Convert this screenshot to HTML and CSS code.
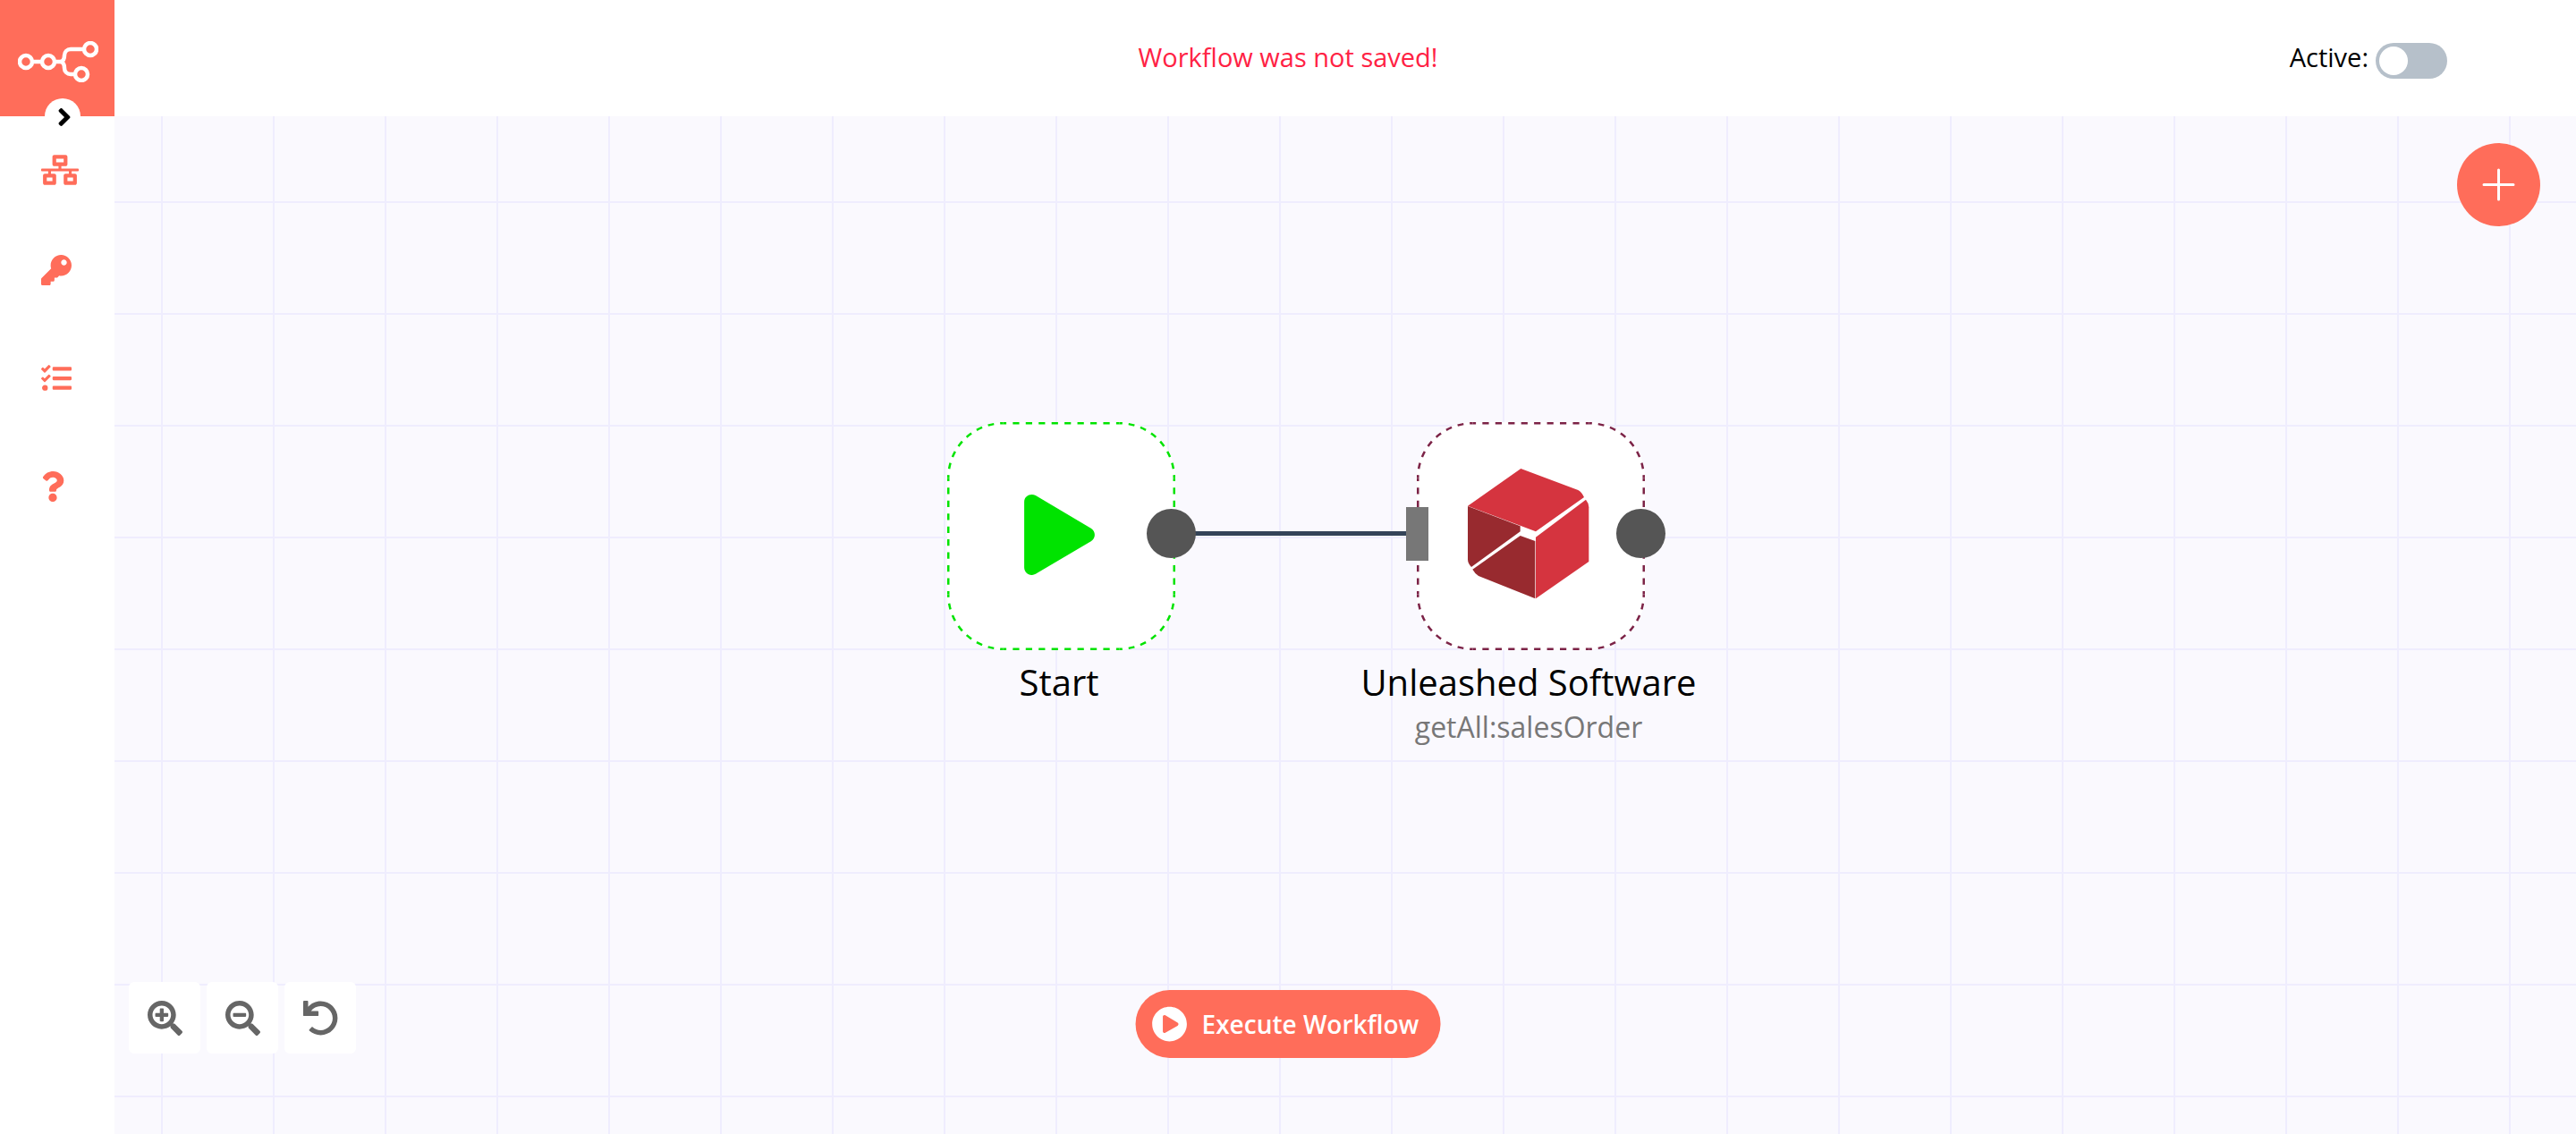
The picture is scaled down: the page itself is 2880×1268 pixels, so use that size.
FILE: index.html
```html
<!DOCTYPE html>
<html lang="en">
<head>
<meta charset="utf-8">
<title>Workflow</title>
<link rel="stylesheet" href="styles.css">
</head>
<body>
<div class="app">
  <header class="topbar">
    <a class="logo" href="#" aria-label="Home">
      <svg width="90" height="46" viewBox="0 0 90 46" fill="none" stroke="currentColor" stroke-width="4.500">
        <circle cx="9" cy="23" r="7"/><circle cx="34" cy="23" r="7"/><circle cx="81" cy="9" r="7"/><circle cx="71" cy="37" r="7"/>
        <path d="M16 23h11M41 23h6c4 0 5-4 5-7 0-4 3-7 7-7h15M47 23c4 0 5 4 5 7 0 4 3 7 7 7h5"/>
      </svg>
    </a>
    <p class="status" role="status">Workflow was not saved!</p>
    <div class="activation">
      <label for="active">Active:</label>
      <input class="switch" id="active" type="checkbox" role="switch">
    </div>
  </header>

  <aside class="sidebar">
    <button class="expand" type="button" aria-label="Expand menu">
      <svg width="16" height="32" viewBox="0 0 256 512" fill="currentColor"><path d="M224.300 273l-136 136c-9.400 9.400-24.600 9.400-33.900 0l-22.600-22.600c-9.400-9.400-9.400-24.600 0-33.900l96.400-96.400-96.400-96.400c-9.400-9.400-9.400-24.600 0-33.900L54.300 103c9.400-9.400 24.600-9.400 33.900 0l136 136c9.500 9.400 9.500 24.600.1 34z"/></svg>
    </button>
    <nav>
      <ul class="menu">
        <li><a href="#" aria-label="Workflows"><svg width="42" height="34" viewBox="0 0 640 512" fill="currentColor"><path d="M640 264v-16c0-8.840-7.160-16-16-16H344v-40h72c17.670 0 32-14.330 32-32V32c0-17.670-14.330-32-32-32H224c-17.670 0-32 14.330-32 32v128c0 17.670 14.330 32 32 32h72v40H16c-8.840 0-16 7.160-16 16v16c0 8.840 7.160 16 16 16h104v40H64c-17.670 0-32 14.330-32 32v128c0 17.670 14.330 32 32 32h160c17.670 0 32-14.330 32-32V352c0-17.670-14.330-32-32-32h-56v-40h304v40h-56c-17.670 0-32 14.330-32 32v128c0 17.670 14.330 32 32 32h160c17.670 0 32-14.330 32-32V352c0-17.670-14.330-32-32-32h-56v-40h104c8.840 0 16-7.160 16-16zM256 128V64h128v64H256zm-64 320H96v-64h96v64zm352 0h-96v-64h96v64z"/></svg></a></li>
        <li><a href="#" aria-label="Credentials"><svg width="34" height="34" viewBox="0 0 512 512" fill="currentColor"><path d="M512 176.001C512 273.203 433.202 352 336 352c-11.220 0-22.190-1.062-32.827-3.069l-24.012 27.014A23.999 23.999 0 0 1 261.223 384H224v40c0 13.255-10.745 24-24 24h-40v40c0 13.255-10.745 24-24 24H24c-13.255 0-24-10.745-24-24v-78.059c0-6.365 2.529-12.470 7.029-16.971l161.802-161.802C163.108 213.814 160 195.271 160 176 160 78.798 238.797.001 335.999 0 433.488-.001 512 78.511 512 176.001zM336 128c0 26.510 21.490 48 48 48s48-21.490 48-48-21.490-48-48-48-48 21.490-48 48z"/></svg></a></li>
        <li class="menu-group"><a href="#" aria-label="Executions"><svg width="34" height="34" viewBox="0 0 512 512" fill="currentColor"><path d="M139.610 35.500a12 12 0 0 0-17 0L58.930 98.810l-22.700-22.120a12 12 0 0 0-17 0L3.530 92.410a12 12 0 0 0 0 17l47.590 47.400a12.780 12.780 0 0 0 17.610 0l15.590-15.620L156.520 69a12.090 12.090 0 0 0 .09-17zm0 159.190a12 12 0 0 0-17 0l-63.680 63.720-22.700-22.100a12 12 0 0 0-17 0L3.530 252a12 12 0 0 0 0 17L51 316.500a12.770 12.770 0 0 0 17.600 0l15.700-15.690 72.200-72.220a12 12 0 0 0 .09-16.900zM64 368c-26.490 0-48.590 21.500-48.590 48S37.530 464 64 464a48 48 0 0 0 0-96zm432 16H208a16 16 0 0 0-16 16v32a16 16 0 0 0 16 16h288a16 16 0 0 0 16-16v-32a16 16 0 0 0-16-16zm0-320H208a16 16 0 0 0-16 16v32a16 16 0 0 0 16 16h288a16 16 0 0 0 16-16V80a16 16 0 0 0-16-16zm0 160H208a16 16 0 0 0-16 16v32a16 16 0 0 0 16 16h288a16 16 0 0 0 16-16v-32a16 16 0 0 0-16-16z"/></svg></a></li>
        <li class="menu-group"><a href="#" aria-label="Help"><svg width="26" height="34" viewBox="0 0 384 512" fill="currentColor"><path d="M202.021 0C122.202 0 70.503 32.703 29.914 91.026c-7.363 10.580-5.093 25.086 5.178 32.874l43.138 32.709c10.373 7.865 25.132 6.026 33.253-4.148 25.049-31.381 43.630-49.449 82.757-49.449 30.764 0 68.816 19.799 68.816 49.631 0 22.552-18.617 34.134-48.993 51.164-35.423 19.860-82.299 44.576-82.299 106.405V320c0 13.255 10.745 24 24 24h72.471c13.255 0 24-10.745 24-24v-5.773c0-42.860 125.268-44.645 125.268-160.627C377.504 66.256 286.902 0 202.021 0zM192 373.459c-38.196 0-69.271 31.075-69.271 69.271 0 38.195 31.075 69.270 69.271 69.270s69.271-31.075 69.271-69.271-31.075-69.270-69.271-69.270z"/></svg></a></li>
      </ul>
    </nav>
  </aside>

  <main class="canvas">
    <div class="connection"></div>

    <section class="node node-start">
      <div class="node-box">
        <svg class="frame" width="255" height="255" viewBox="0 0 255 255">
          <rect width="255" height="255" rx="62" fill="#fff"/>
          <g fill="none" stroke="currentColor" stroke-width="2.500">
            <path pathLength="72" stroke-dasharray="1" stroke-dashoffset=".5" d="M62.500 1.250h130M62.500 253.750h130M1.250 62.500v130M253.750 62.500v130"/>
            <path pathLength="56" stroke-dasharray="1" stroke-dashoffset=".5" d="M1.250 62.500A61.250 61.250 0 0 1 62.500 1.250M192.500 1.250A61.250 61.250 0 0 1 253.750 62.500M253.750 192.500A61.250 61.250 0 0 1 192.500 253.750M62.500 253.750A61.250 61.250 0 0 1 1.250 192.500"/>
          </g>
        </svg>
        <svg class="glyph" width="79" height="92" viewBox="0 -11 448 523" fill="#00e300"><path d="M424.400 214.700L72.400 6.600C43.800-10.300 0 6.100 0 47.900V464c0 37.500 40.700 60.100 72.400 41.300l352-208c31.400-18.500 31.500-64.100 0-82.600z"/></svg>
        <span class="port-out"></span>
      </div>
      <h2 class="node-name">Start</h2>
    </section>

    <section class="node node-unleashed">
      <div class="node-box">
        <svg class="frame" width="255" height="255" viewBox="0 0 255 255">
          <rect width="255" height="255" rx="62" fill="#fff"/>
          <g fill="none" stroke="currentColor" stroke-width="2.500">
            <path pathLength="72" stroke-dasharray="1" stroke-dashoffset=".5" d="M62.500 1.250h130M62.500 253.750h130M1.250 62.500v130M253.750 62.500v130"/>
            <path pathLength="56" stroke-dasharray="1" stroke-dashoffset=".5" d="M1.250 62.500A61.250 61.250 0 0 1 62.500 1.250M192.500 1.250A61.250 61.250 0 0 1 253.750 62.500M253.750 192.500A61.250 61.250 0 0 1 192.500 253.750M62.500 253.750A61.250 61.250 0 0 1 1.250 192.500"/>
          </g>
        </svg>
        <svg class="glyph" width="136" height="146" viewBox="0 0 408 438">
          <path fill="#d5343f" d="M178 0l192 72q12 6 20 24L228 211l-50-19L0 125z"/>
          <path fill="#d5343f" d="M396 104q10 12 10 26v182L228 436V230z"/>
          <path fill="#982a2f" d="M0 126l176 67v18L12 330Q0 318 0 304z"/>
          <path fill="#982a2f" d="M16 338L176 225l50 18v193L36 360q-12-8-20-22z"/>
        </svg>
        <span class="port-in"></span>
        <span class="port-out"></span>
      </div>
      <h2 class="node-name">Unleashed Software</h2>
      <p class="node-subtitle">getAll:salesOrder</p>
    </section>

    <button class="add" type="button" aria-label="Add node">
      <svg width="37" height="37" viewBox="0 0 37 37" fill="none" stroke="currentColor" stroke-width="3" stroke-linecap="round"><path d="M18.500 2v33M2 18.500h33"/></svg>
    </button>

    <div class="zoom">
      <button type="button" aria-label="Zoom in"><svg width="39" height="39" viewBox="0 0 512 512" fill="currentColor"><path d="M304 192v32c0 6.600-5.400 12-12 12h-56v56c0 6.600-5.400 12-12 12h-32c-6.600 0-12-5.400-12-12v-56h-56c-6.600 0-12-5.400-12-12v-32c0-6.600 5.400-12 12-12h56v-56c0-6.600 5.400-12 12-12h32c6.600 0 12 5.400 12 12v56h56c6.600 0 12 5.400 12 12zm201 284.700L476.700 505c-9.400 9.400-24.600 9.400-33.900 0L343 405.300c-4.500-4.500-7-10.600-7-17V372c-35.300 27.600-79.700 44-128 44C93.100 416 0 322.900 0 208S93.100 0 208 0s208 93.100 208 208c0 48.300-16.400 92.700-44 128h16.300c6.400 0 12.500 2.500 17 7l99.700 99.700c9.300 9.400 9.300 24.600 0 34zM344 208c0-75.200-60.800-136-136-136S72 132.800 72 208s60.800 136 136 136 136-60.800 136-136z"/></svg></button>
      <button type="button" aria-label="Zoom out"><svg width="39" height="39" viewBox="0 0 512 512" fill="currentColor"><path d="M304 192v32c0 6.600-5.400 12-12 12H124c-6.600 0-12-5.400-12-12v-32c0-6.600 5.400-12 12-12h168c6.600 0 12 5.400 12 12zm201 284.700L476.700 505c-9.400 9.400-24.600 9.400-33.900 0L343 405.300c-4.500-4.500-7-10.600-7-17V372c-35.300 27.600-79.700 44-128 44C93.100 416 0 322.900 0 208S93.100 0 208 0s208 93.100 208 208c0 48.300-16.400 92.700-44 128h16.300c6.400 0 12.500 2.500 17 7l99.700 99.700c9.300 9.400 9.300 24.600 0 34zM344 208c0-75.200-60.800-136-136-136S72 132.800 72 208s60.800 136 136 136 136-60.800 136-136z"/></svg></button>
      <button type="button" aria-label="Reset zoom"><svg width="39" height="39" viewBox="0 0 512 512" fill="currentColor"><path d="M212.333 224.333H12c-6.627 0-12-5.373-12-12V12C0 5.373 5.373 0 12 0h48c6.627 0 12 5.373 12 12v78.112C117.773 39.279 184.260 7.470 258.175 8.007c136.906.994 246.448 111.623 246.157 248.532C504.041 393.258 393.120 504 256.333 504c-64.089 0-122.496-24.313-166.510-64.215-5.099-4.622-5.334-12.554-.467-17.420l33.967-33.967c4.474-4.474 11.662-4.717 16.401-.525C170.760 415.336 211.580 432 256.333 432c97.268 0 176-78.716 176-176 0-97.267-78.716-176-176-176-58.496 0-110.280 28.476-142.274 72.333h98.274c6.627 0 12 5.373 12 12v48c0 6.627-5.373 12-12 12z"/></svg></button>
    </div>

    <button class="execute" type="button">
      <svg width="40" height="40" viewBox="0 0 512 512" fill="currentColor"><path d="M256 8C119 8 8 119 8 256s111 248 248 248 248-111 248-248S393 8 256 8zm115.700 272l-176 101c-15.800 8.800-35.700-2.500-35.700-21V152c0-18.400 19.800-29.800 35.700-21l176 107c16.400 9.200 16.400 32.900 0 42z"/></svg>
      Execute Workflow
    </button>
  </main>
</div>
</body>
</html>
```
FILE: styles.css
```css
* {
  box-sizing: border-box;
}

body {
  margin: 0;
  color: #000;
  font-family: "Open Sans", "Noto Sans", sans-serif;
  font-size: 29px;
  line-height: 38px;
}

button {
  display: flex;
  align-items: center;
  justify-content: center;
  padding: 0;
  border: 0;
  font: inherit;
  cursor: pointer;
}

svg {
  display: block;
  flex: none;
}

.app {
  display: grid;
  grid-template: 130px 1fr / 128px 1fr;
  min-height: 100vh;
}

/* Top bar */
.topbar {
  grid-column: 1 / -1;
  display: grid;
  grid-template-columns: 1fr auto 1fr;
  align-items: center;
  background: #fff;
}

.logo {
  display: flex;
  width: 128px;
  height: 130px;
  padding: 46px 0 0 20px;
  background: #ff6d5a;
  color: #fff;
}

.status {
  margin: 0;
  padding-bottom: 2px;
  color: #ff2244;
}

.activation {
  display: flex;
  align-items: center;
  justify-content: flex-end;
  gap: 8px;
  padding: 0 144px 2px 0;
}

.switch {
  appearance: none;
  width: 80px;
  height: 40px;
  margin: 8px 0 0;
  padding: 4px;
  border-radius: 20px;
  background: #b6c0ca;
}

.switch::before {
  content: "";
  display: block;
  width: 32px;
  height: 32px;
  border-radius: 50%;
  background: #fff;
}

.switch:checked {
  background: #13ce66;
}

.switch:checked::before {
  margin-left: 40px;
}

/* Side menu */
.sidebar {
  position: relative;
  background: #fff;
}

.expand {
  position: absolute;
  top: -20px;
  left: 50px;
  width: 40px;
  height: 40px;
  padding: 2px 0 0 4px;
  border-radius: 50%;
  background: #fff;
  color: #000;
}

.menu {
  margin: 0;
  padding: 4px 0 0;
  list-style: none;
}

.menu a {
  display: flex;
  align-items: center;
  height: 112px;
  padding-left: 46px;
  color: #ff6d5a;
}

.menu-group {
  margin-top: 9px;
}

/* Canvas */
.canvas {
  position: relative;
  overflow: hidden;
  background-color: #faf9fe;
  background-image:
    linear-gradient(to right, #efedfe 2px, transparent 2px),
    linear-gradient(to bottom, #efedfe 2px, transparent 2px);
  background-position: 52px 95px;
  background-size: 125px 125px;
}

.node {
  position: absolute;
  top: 342px;
  display: flex;
  flex-direction: column;
  align-items: center;
  width: 250px;
}

.node-start {
  left: 931px;
  color: #00e300;
}

.node-unleashed {
  left: 1456px;
  color: #7c2347;
}

.node-box {
  position: relative;
  display: flex;
  align-items: center;
  justify-content: center;
  width: 250px;
  height: 250px;
}

.frame {
  position: absolute;
  top: 0;
  left: 0;
}

.glyph {
  position: relative;
}

.port-out {
  position: absolute;
  top: 97px;
  right: -28px;
  width: 55px;
  height: 55px;
  border-radius: 50%;
  background: #555;
}

.port-in {
  position: absolute;
  top: 95px;
  left: -12px;
  width: 25px;
  height: 60px;
  background: #777;
}

.connection {
  position: absolute;
  top: 464px;
  left: 1181px;
  width: 275px;
  height: 5px;
  background: #344458;
}

.node-name {
  margin: 14px 0 0;
  color: #000;
  font-size: 40px;
  font-weight: 400;
  line-height: 54px;
  white-space: nowrap;
}

.node-subtitle {
  margin: 0;
  color: #777;
  font-size: 32px;
  line-height: 46px;
}

/* Floating controls */
.add {
  position: absolute;
  top: 30px;
  right: 40px;
  width: 93px;
  height: 93px;
  border-radius: 50%;
  background: #ff6d5a;
  color: #fff;
}

.zoom {
  position: absolute;
  bottom: 90px;
  left: 16px;
  display: flex;
  gap: 7px;
}

.zoom button {
  width: 80px;
  height: 80px;
  border-radius: 6px;
  background: #fff;
  color: #666;
}

/* Centred on the window, so half the side menu is taken off */
.execute {
  position: absolute;
  bottom: 85px;
  left: calc(50% - 64px);
  gap: 16px;
  height: 76px;
  padding: 0 24px 0 18px;
  border-radius: 38px;
  background: #ff6d5a;
  color: #fff;
  font-size: 28px;
  font-weight: 600;
  white-space: nowrap;
  transform: translateX(-50%);
}
```
